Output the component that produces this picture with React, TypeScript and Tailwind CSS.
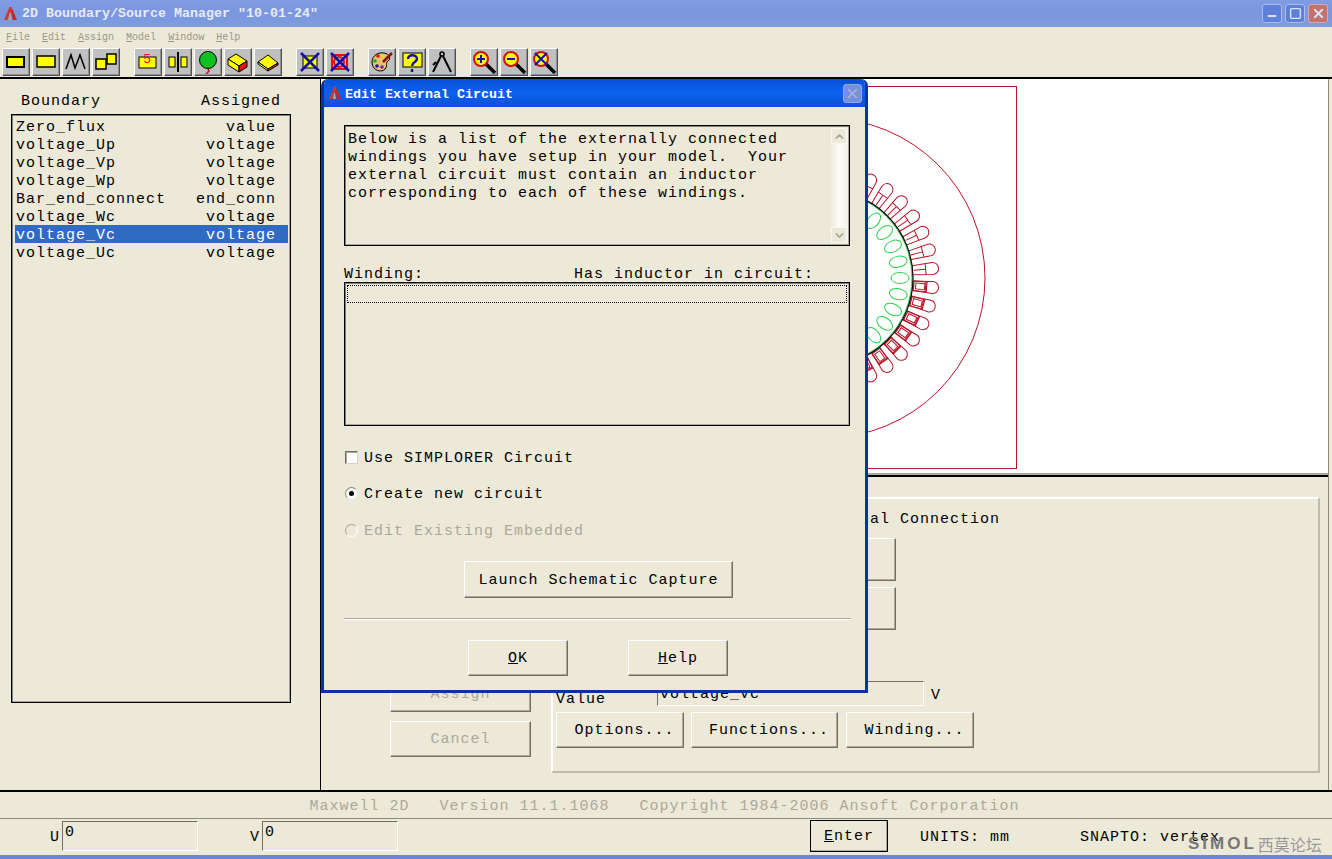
import React from 'react'
import { ChevronDown, ChevronUp, Minus, Square, X } from 'lucide-react'

const raised = 'border border-t-white border-l-white border-r-[#716f64] border-b-[#716f64] shadow-[inset_-1px_-1px_0_#aca899]'
const toolRaised = 'border border-t-white border-l-white border-r-[#505050] border-b-[#505050] shadow-[inset_-1px_-1px_0_#909090]'
const sunken = 'border border-black shadow-[inset_1px_1px_0_#808080,inset_-1px_-1px_0_#aca899]'
const field = 'border border-t-[#716f64] border-l-[#716f64] border-r-white border-b-white'
// the mono font sits high in its line box, so the line box is taller than the row
const line = 'block h-[18px] leading-[22px]'

const boundaries = [
    ['Zero_flux', 'value'],
    ['voltage_Up', 'voltage'],
    ['voltage_Vp', 'voltage'],
    ['voltage_Wp', 'voltage'],
    ['Bar_end_connect', 'end_conn'],
    ['voltage_Wc', 'voltage'],
    ['voltage_Vc', 'voltage'],
    ['voltage_Uc', 'voltage'],
]

const Logo = ({ className }: { className: string }) => (
    <svg viewBox="0 0 14 14" className={className}>
        <polygon points="6,1 8,1 8,3 4,13 1,13" fill="#d8362a" />
        <polygon points="7,3 9,3 13,13 9,13" fill="#c22a22" />
        <polygon points="6,7 7,7 8,13 5,13" fill="#a8a8a8" />
    </svg>
)

const Y = '#ffff00'
const toolbarIcons: React.ReactNode[] = [
    <>
        <rect x="3" y="7" width="17" height="10" fill={Y} stroke="#000" strokeWidth="2" />
        <path d="M3 7h.01M20 7h.01M3 17h.01M20 17h.01" stroke="#000" strokeWidth="3" />
    </>,
    <rect x="3" y="6" width="18" height="11" fill={Y} stroke="#000" strokeWidth="1.5" />,
    <>
        <path d="M2 19 L7 5 L11 18 L16 5 L21 19" fill="none" stroke="#000" strokeWidth="1.5" />
        <path d="M2 19h.01M7 5h.01M11 18h.01M16 5h.01M21 19h.01" stroke="#000" strokeWidth="2.5" />
    </>,
    <>
        <rect x="2" y="9" width="10" height="10" fill={Y} stroke="#000" strokeWidth="1.5" />
        <rect x="13" y="4" width="9" height="10" fill={Y} stroke="#000" strokeWidth="1.5" />
    </>,
    <>
        <rect x="3" y="7" width="17" height="11" fill={Y} stroke="#000" />
        <text x="11.5" y="13" textAnchor="middle" fontSize="13" fontFamily="Liberation Sans" fill="#e81010">5</text>
    </>,
    <>
        <rect x="3" y="7" width="6" height="10" fill={Y} stroke="#000" />
        <rect x="15" y="7" width="6" height="10" fill={Y} stroke="#000" />
        <path d="M12 2v20" stroke="#000" strokeWidth="2" />
    </>,
    <>
        <ellipse cx="12" cy="10" rx="8.5" ry="8.5" fill="#10c020" stroke="#000" />
        <path d="M12 19 L13 21 L10 24" fill="none" stroke="#d01010" strokeWidth="1.5" />
    </>,
    <>
        <polygon points="2,9 10,4 21,11 13,16" fill={Y} stroke="#000" />
        <polygon points="2,9 13,16 13,22 2,15" fill={Y} stroke="#000" />
        <polygon points="13,16 21,11 21,17 13,22" fill="#e01818" stroke="#000" />
    </>,
    <>
        <polygon points="2,12 12,5 22,13 12,19" fill={Y} stroke="#000" />
        <polygon points="2,12 12,19 12,21 2,14" fill={Y} stroke="#000" />
        <polygon points="12,19 22,13 22,15 12,21" fill="#e01818" stroke="#000" />
    </>,
    <>
        <rect x="5" y="6" width="14" height="12" fill={Y} stroke="#000" />
        <path d="M3 3 L21 21 M21 3 L3 21" stroke="#1010b0" strokeWidth="2.5" />
    </>,
    <>
        <rect x="4" y="5" width="15" height="14" fill="none" stroke="#e01010" strokeWidth="2" />
        <circle cx="11" cy="12" r="5" fill="none" stroke="#e01010" strokeWidth="2" />
        <path d="M3 3 L21 21 M21 3 L3 21" stroke="#1010b0" strokeWidth="2.5" />
    </>,
    <>
        <path d="M2 12 C2 5 9 2 14 3 C20 4 21 9 18 11 C15 13 18 16 15 19 C12 23 2 21 2 12Z" fill="#e8c070" stroke="#000" />
        <circle cx="8" cy="6" r="1.8" fill="#e01010" />
        <circle cx="13" cy="6" r="1.8" fill="#e0e010" />
        <circle cx="5" cy="11" r="1.8" fill="#10b020" />
        <circle cx="7" cy="16" r="1.8" fill="#1010c0" />
        <circle cx="12" cy="17" r="1.8" fill="#8020a0" />
        <path d="M13 12 L22 3" stroke="#801010" strokeWidth="2.5" />
    </>,
    <>
        <rect x="3" y="3" width="19" height="14" fill={Y} stroke="#000" />
        <path d="M3 3h.01M22 3h.01M3 17h.01M22 17h.01" stroke="#000" strokeWidth="3" />
        <path d="M8 9 C8 4 17 4 17 9 C17 12 12 12 12 16" fill="none" stroke="#1010b0" strokeWidth="2.5" />
        <path d="M12 19v3" stroke="#1010b0" strokeWidth="2.5" />
    </>,
    <>
        <circle cx="12" cy="4" r="2" fill="none" stroke="#000" strokeWidth="1.5" />
        <path d="M11 6 L3 22 M13 6 L21 22 M6 12 L3 15" fill="none" stroke="#000" strokeWidth="2" />
    </>,
    <>
        <path d="M14 14 L23 23" stroke="#000" strokeWidth="3.5" />
        <circle cx="9" cy="9" r="7" fill={Y} stroke="#d01010" strokeWidth="2" />
        <path d="M5 9h8M9 5v8" stroke="#1010b0" strokeWidth="2" />
    </>,
    <>
        <path d="M14 14 L23 23" stroke="#000" strokeWidth="3.5" />
        <circle cx="9" cy="9" r="7" fill={Y} stroke="#d01010" strokeWidth="2" />
        <path d="M5 9h8" stroke="#1010b0" strokeWidth="2" />
    </>,
    <>
        <path d="M14 14 L23 23" stroke="#000" strokeWidth="3.5" />
        <circle cx="9" cy="9" r="7" fill={Y} stroke="#d01010" strokeWidth="2" />
        <path d="M3 3 L15 15 M15 3 L3 15" stroke="#1010b0" strokeWidth="2" />
    </>,
]

const ToolButton = ({ children }: { children: React.ReactNode }) => (
    <div className={`w-[28px] h-[28px] bg-[#c0c0c0] flex items-center justify-center ${toolRaised}`}>
        <svg viewBox="0 0 24 24" className="w-[24px] h-[24px]">{children}</svg>
    </div>
)

const ToolGroup = ({ from, to, className }: { from: number; to: number; className?: string }) => (
    <div className={`flex gap-[2px] ${className ?? ''}`}>
        {toolbarIcons.slice(from, to).map((icon, i) => (
            <ToolButton key={i}>{icon}</ToolButton>
        ))}
    </div>
)

// stator slots, rotor bars and outer circle of the motor model
const CX = 825
const CY = 278
const RED = '#b81428'

const MotorDrawing = () => {
    const slots = []
    for (let k = 0; k < 36; k++) {
        const angle = 5 + k * 10
        const lower = angle < 90
        slots.push(
            <g key={k} transform={`rotate(${angle} ${CX} ${CY})`} fill="none" stroke={RED}>
                <path d={`M${CX + 88} ${CY - 4.5} L${CX + 108} ${CY - 6} A6 6 0 0 1 ${CX + 108} ${CY + 6} L${CX + 88} ${CY + 4.5}`} />
                <path d={`M${CX + 101} ${CY - 5.5}V${CY + 5.5}`} />
                {lower ? (
                    <>
                        <rect x={CX + 89} y={CY - 5} width={13} height={10} strokeWidth="1.2" />
                        <rect x={CX + 91} y={CY - 3} width={9} height={6} />
                    </>
                ) : (
                    <path d={`M${CX + 89} ${CY}H${CX + 101}`} />
                )}
            </g>,
        )
    }
    const bars = []
    for (let k = 0; k < 29; k++) {
        bars.push(
            <ellipse
                key={k}
                cx={CX + 75}
                cy={CY}
                rx={9}
                ry={5.5}
                fill="none"
                stroke="#28d048"
                transform={`rotate(${k * 12.41} ${CX} ${CY})`}
            />,
        )
    }
    return (
        <svg viewBox="321 79 1007 394" className="block w-full h-full">
            <rect x="633.5" y="86.5" width="383" height="382" fill="none" stroke={RED} />
            <circle cx={CX} cy={CY} r={160} fill="none" stroke={RED} />
            {slots}
            {bars}
            <circle cx={CX} cy={CY} r={87} fill="none" stroke="#28d048" />
            <circle cx={CX} cy={CY} r={88} fill="none" stroke="#000" strokeWidth="1.2" />
        </svg>
    )
}

const ScrollButton = ({ children }: { children: React.ReactNode }) => (
    <div className="w-[16px] h-[16px] mx-auto bg-[#ece9d8] border border-[#f8f7f0] flex items-center justify-center text-[#aca899]">
        {children}
    </div>
)

const EditCircuitDialog = () => (
    <div className="absolute left-[321px] top-[79px] w-[547px] h-[614px] flex flex-col bg-[#ece9d8] border-[3px] border-t-0 border-[#0a32a8] rounded-t-[7px] overflow-hidden">
        <div className="h-[28px] shrink-0 -mx-px pl-[5px] pr-[4px] flex items-center bg-gradient-to-b from-[#0a4fd8] via-[#0a62ee] to-[#0a50d4]">
            <Logo className="w-[14px] h-[14px]" />
            <span className={`ml-[3px] text-[13.33px] font-bold text-white tracking-normal ${line}`}>Edit External Circuit</span>
            <div className="ml-auto w-[19px] h-[19px] rounded-[3px] bg-[#7590e0] border border-[#93a8e6] flex items-center justify-center text-[#a9b6dc]">
                <X size={15} strokeWidth={2.5} />
            </div>
        </div>
        <div className="flex-1 px-[20px] pt-[18px] flex flex-col">
            <div className={`w-[506px] h-[121px] flex ${sunken}`}>
                <div className="flex-1 pl-[3px] pt-[5px] whitespace-pre">
                    {'Below is a list of the externally connected\nwindings you have setup in your model.  Your\nexternal circuit must contain an inductor\ncorresponding to each of these windings.'}
                </div>
                <div className="w-[18px] my-[2px] mr-[1px] flex flex-col justify-between bg-gradient-to-r from-[#ece9d8] via-[#fbfbf8] to-[#f2f0e6]">
                    <ScrollButton><ChevronUp size={13} strokeWidth={3} /></ScrollButton>
                    <ScrollButton><ChevronDown size={13} strokeWidth={3} /></ScrollButton>
                </div>
            </div>
            <div className="mt-[18px] flex">
                <span className={`w-[230px] ${line}`}>Winding:</span>
                <span className={line}>Has inductor in circuit:</span>
            </div>
            <div className={`w-[506px] h-[144px] p-[2px] ${sunken}`}>
                <div className="h-[18px] border border-dotted border-black" />
            </div>
            <div className="mt-[22px] flex items-center gap-[6px]">
                <div className="w-[13px] h-[13px] ml-px bg-white border border-t-[#716f64] border-l-[#716f64] border-r-[#d8d5c6] border-b-[#d8d5c6] shadow-[inset_1px_1px_0_#aca899]" />
                <span className={line}>Use SIMPLORER Circuit</span>
            </div>
            <div className="mt-[18px] flex items-center gap-[6px]">
                <div className="w-[13px] h-[13px] ml-px rounded-full bg-white border border-t-[#8a8878] border-l-[#8a8878] border-r-[#e4e1d2] border-b-[#e4e1d2] flex items-center justify-center">
                    <div className="w-[5px] h-[5px] rounded-full bg-black" />
                </div>
                <span className={line}>Create new circuit</span>
            </div>
            <div className="mt-[19px] flex items-center gap-[6px] text-[#aca899]">
                <div className="w-[13px] h-[13px] ml-px rounded-full bg-[#ece9d8] border border-t-[#aca899] border-l-[#aca899] border-r-white border-b-white" />
                <span className={line}>Edit Existing Embedded</span>
            </div>
            <div className={`mt-[22px] ml-[120px] w-[269px] h-[37px] pt-[2px] flex items-center justify-center ${raised}`}>
                Launch Schematic Capture
            </div>
            <div className="mt-[20px] w-[507px] h-[2px] bg-[#aca899] border-b border-white" />
            <div className="mt-[20px] ml-[124px] flex gap-[60px]">
                <div className={`w-[100px] h-[36px] pt-px flex items-center justify-center ${raised}`}><span><u>O</u>K</span></div>
                <div className={`w-[100px] h-[36px] pt-px flex items-center justify-center ${raised}`}><span><u>H</u>elp</span></div>
            </div>
        </div>
    </div>
)

const App = () => {
    return (
        <div className="relative w-[1332px] h-[859px] overflow-hidden flex flex-col bg-[#ece9d8] text-black text-[15px] leading-[18px] tracking-[1px] font-['Liberation_Mono',monospace]">
            {/* window title */}
            <div className="h-[27px] shrink-0 pl-[3px] pr-[4px] flex items-center bg-gradient-to-b from-[#7f9be3] via-[#7a96df] to-[#7f9ce2] text-[#e4ebf9]">
                <Logo className="w-[15px] h-[15px]" />
                <span className="ml-[4px] text-[13.33px] font-bold tracking-normal whitespace-pre">2D Boundary/Source Manager "10-01-24"</span>
                <div className="ml-auto flex gap-[3px] text-[#dbe4f7]">
                    <div className="w-[20px] h-[19px] rounded-[3px] bg-[#5f80d8] border border-[#a9bcec] flex items-end justify-center"><Minus size={12} strokeWidth={4} /></div>
                    <div className="w-[20px] h-[19px] rounded-[3px] bg-[#5f80d8] border border-[#a9bcec] flex items-center justify-center"><Square size={13} strokeWidth={2.5} /></div>
                    <div className="w-[20px] h-[19px] rounded-[3px] bg-[#c4736c] border border-[#d8a9b0] flex items-center justify-center"><X size={15} strokeWidth={3} /></div>
                </div>
            </div>

            {/* menu */}
            <div className="h-[20px] shrink-0 pl-[6px] pt-[2px] flex items-center gap-[12px] text-[10px] tracking-normal text-[#9a9888]">
                <span><u>F</u>ile</span>
                <span><u>E</u>dit</span>
                <span><u>A</u>ssign</span>
                <span><u>M</u>odel</span>
                <span><u>W</u>indow</span>
                <span><u>H</u>elp</span>
            </div>

            {/* toolbar */}
            <div className="h-[30px] shrink-0 pl-[2px] pt-px flex">
                <ToolGroup from={0} to={4} />
                <ToolGroup from={4} to={9} className="ml-[14px]" />
                <ToolGroup from={9} to={11} className="ml-[14px]" />
                <ToolGroup from={11} to={14} className="ml-[14px]" />
                <ToolGroup from={14} to={17} className="ml-[14px]" />
            </div>

            {/* boundary list and model */}
            <div className="h-[715px] shrink-0 flex border-y-2 border-black pr-[3px]">
                <div className="w-[321px] shrink-0 border-r border-black">
                    <div className="pt-[12px] pl-[21px] flex">
                        <span className={`w-[180px] ${line}`}>Boundary</span>
                        <span className={line}>Assigned</span>
                    </div>
                    <div className={`mt-[5px] ml-[11px] w-[280px] h-[589px] pl-[3px] pr-[2px] pt-[2px] ${sunken}`}>
                        {boundaries.map(([name, type]) => (
                            <div
                                key={name}
                                className={`h-[18px] leading-[22px] pl-px pr-[12px] flex justify-between ${name === 'voltage_Vc' ? 'bg-[#316ac5] text-white' : ''}`}
                            >
                                <span>{name}</span>
                                <span>{type}</span>
                            </div>
                        ))}
                    </div>
                </div>
                <div className="flex-1 flex flex-col border-r border-[#8a8a7a]">
                    <div className="h-[396px] shrink-0 bg-white border-b-2 border-[#aca899]">
                        <MotorDrawing />
                    </div>
                    <div className="h-[2px] shrink-0 bg-black" />
                    <div className="flex-1 flex">
                        <div className="ml-[69px] mt-[199px] w-[141px] flex flex-col gap-[9px] text-[#aca899]">
                            <div className={`h-[36px] pt-px flex items-center justify-center ${raised}`}>Assign</div>
                            <div className={`h-[36px] pt-px flex items-center justify-center ${raised}`}>Cancel</div>
                        </div>
                        <div className="ml-[20px] mt-[20px] w-[769px] h-[276px] pt-[10px] pl-[3px] border-2 border-t-white border-l-white border-r-[#bdbaaa] border-b-[#bdbaaa]">
                            <div className={`pl-[254px] ${line}`}>External Connection</div>
                            <div className={`mt-[11px] ml-[144px] w-[196px] h-[43px] ${raised}`} />
                            <div className={`mt-[6px] ml-[144px] w-[196px] h-[43px] ${raised}`} />
                            <div className="mt-[51px] flex items-end h-[25px]">
                                <span className={`w-[101px] -mb-px ${line}`}>Value</span>
                                <div className={`w-[267px] h-[25px] pl-[2px] leading-[26px] ${field}`}>voltage_Vc</div>
                                <span className={`ml-[7px] self-center ${line}`}>V</span>
                            </div>
                            <div className="mt-[6px] flex">
                                <div className={`w-[128px] h-[36px] pl-[9px] pt-px flex items-center justify-center ${raised}`}>Options...</div>
                                <div className={`ml-[7px] w-[147px] h-[36px] pl-[9px] pt-px flex items-center justify-center ${raised}`}>Functions...</div>
                                <div className={`ml-[8px] w-[128px] h-[36px] pl-[9px] pt-px flex items-center justify-center ${raised}`}>Winding...</div>
                            </div>
                        </div>
                    </div>
                </div>
            </div>

            {/* status */}
            <div className="h-[27px] shrink-0 pr-[3px] flex items-center justify-center whitespace-pre text-[#aca899] border-b border-[#8a8a7a]">
                <span className={line}>{'Maxwell 2D   Version 11.1.1068   Copyright 1984-2006 Ansoft Corporation'}</span>
            </div>
            <div className="h-[36px] shrink-0 pl-[50px] pt-[2px] flex items-start">
                <span className="mt-[6px] h-[18px] leading-[22px]">U</span>
                <div className={`ml-[2px] w-[136px] h-[30px] pl-[2px] leading-[22px] ${field}`}>0</div>
                <span className="ml-[52px] mt-[6px] h-[18px] leading-[22px]">V</span>
                <div className={`ml-[2px] w-[136px] h-[30px] pl-[2px] leading-[22px] ${field}`}>0</div>
                <div className={`ml-[412px] -mt-px w-[78px] h-[32px] pt-[2px] flex items-center justify-center outline outline-1 -outline-offset-1 outline-black ${raised}`}>
                    <span><u>E</u>nter</span>
                </div>
                <span className="ml-[32px] mt-[7px] h-[18px] leading-[20px] whitespace-pre">UNITS: mm</span>
                <span className="ml-[70px] mt-[7px] h-[18px] leading-[20px] whitespace-pre">SNAPTO: vertex</span>
            </div>
            <div className="h-[4px] shrink-0 bg-[#6f84d2]" />

            <EditCircuitDialog />

            {/* forum watermark */}
            <div className="absolute left-[1188px] top-[836px] flex items-center text-[#777777] tracking-normal">
                <span className="text-[17px] leading-[16px] font-bold tracking-[3px] font-['Liberation_Sans',sans-serif]">SIMOL</span>
                <span className="ml-[1px] text-[16px] leading-[16px] text-[#999999] font-['Noto_Sans_CJK_SC',sans-serif]">西莫论坛</span>
            </div>
        </div>
    )
}

export default App
